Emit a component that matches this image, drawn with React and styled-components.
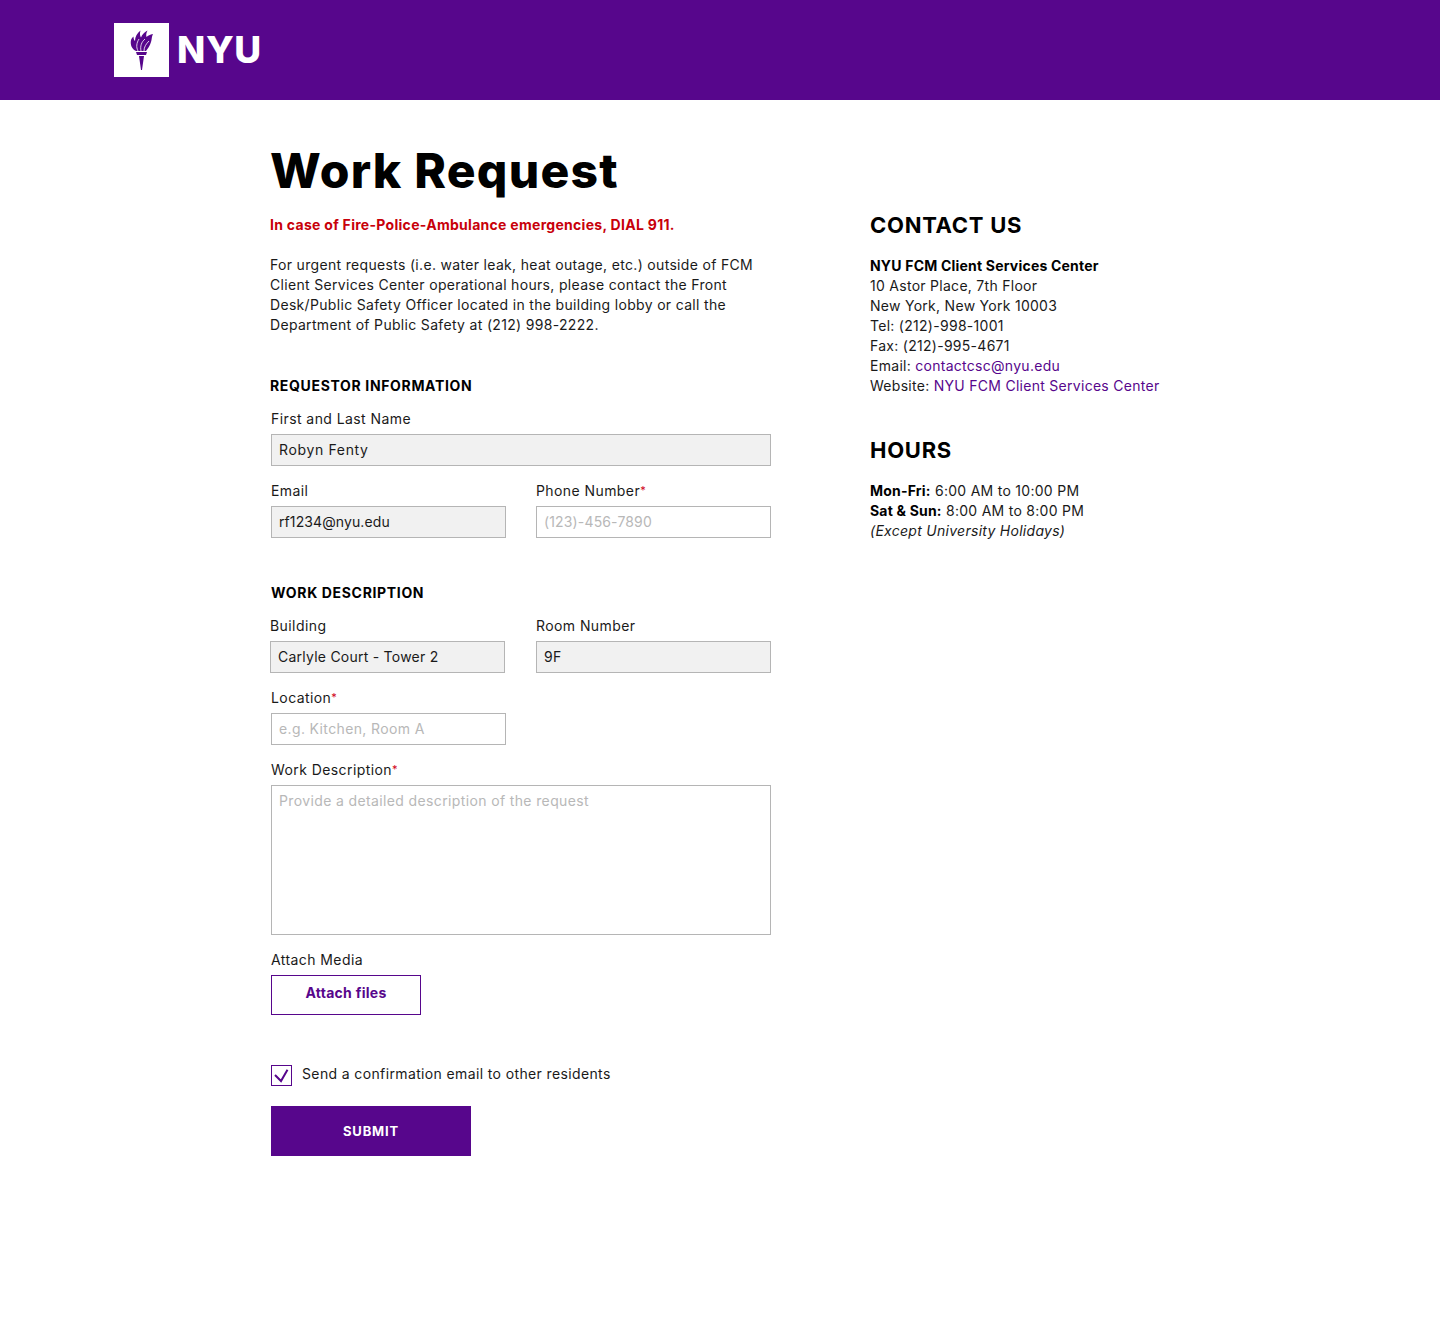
import React from "react";
import styled, { createGlobalStyle } from "styled-components";

const Global = createGlobalStyle`
  html, body { margin: 0; padding: 0; background: #fff; }
  body { font-family: Inter, "Liberation Sans", sans-serif; color: #1a1a1a; }
  * { box-sizing: border-box; }
`;
const Page = styled.div`min-height: 1333px;`;
const Header = styled.header`
  height: 100px; background: #57068c; padding: 23px 0 0 114px;
  display: flex; align-items: flex-start; gap: 8px;
`;
const LogoBox = styled.div`
  width: 55px; height: 54px; background: #fff;
  display: flex; align-items: center; justify-content: center;
`;
const Wordmark = styled.div`
  color: #fff; font-size: 37px; font-weight: 800; line-height: 54px; letter-spacing: 0.6px;
`;
const Columns = styled.div`
  display: flex; padding: 45px 0 0 270px;
`;
const Left = styled.main`width: 600px;`;
const Right = styled.aside`width: 400px; padding-top: 67px;`;
const Title = styled.h1`
  margin: 0; font-size: 48px; line-height: 52px; font-weight: 800; color: #000; letter-spacing: 1.25px;
`;
const Emergency = styled.p`
  margin: 18px 0 0; font-size: 14px; line-height: 20px; font-weight: 700; color: #c8000a; letter-spacing: 0.29px;
`;
const Body = styled.p`
  margin: 20px 0 0; width: 500px; font-size: 14px; line-height: 20px; color: #1a1a1a; letter-spacing: 0.32px;
`;
const SectionTitle = styled.h2`
  margin: ${p => p.$top}px 0 0 ${p => p.$indent}px; font-size: 14px; line-height: 20px; font-weight: 700; color: #000; letter-spacing: 0.66px;
`;
const Row = styled.div`
  display: flex; gap: 30px; margin-top: ${p => p.$top}px; padding-left: ${p => p.$indent || 0}px;
`;
const Field = styled.div`
  width: ${p => p.$w}px; margin-left: ${p => p.$offset || 0}px;
`;
const Label = styled.label`
  display: block; font-size: 14px; line-height: 20px; color: #1a1a1a; letter-spacing: 0.42px; height: 25px;
`;
const Star = styled.span`color: #d0021b; font-size: 11px; line-height: 0; vertical-align: 2px;`;
const Input = styled.input`
  display: block; width: 100%; height: 32px; padding: 0 7px 2px; border: 1px solid #b5b5b5; border-radius: 0; outline: none;
  font: 14px Inter, "Liberation Sans", sans-serif; letter-spacing: ${p => p.$track}px; color: #1a1a1a;
  background: ${p => (p.readOnly ? "#f1f1f1" : "#fff")};
  &::placeholder { color: #b8b8b8; opacity: 1; }
`;
const TextArea = styled.textarea`
  display: block; width: 100%; height: 150px; padding: 5px 7px; border: 1px solid #b5b5b5; border-radius: 0; resize: none; outline: none;
  font: 14px/20px Inter, "Liberation Sans", sans-serif; letter-spacing: 0.37px; background: #fff;
  &::placeholder { color: #b8b8b8; opacity: 1; }
`;
const AttachButton = styled.button`
  display: block; width: 150px; height: 40px; padding: 0 0 5px; background: #fff; border: 1px solid #57068c; color: #57068c;
  font: 700 14px Inter, "Liberation Sans", sans-serif; letter-spacing: 0.28px;
`;
const CheckRow = styled.div`
  display: flex; align-items: flex-start; gap: 10px; margin: 50px 0 0 1px;
`;
const Box = styled.span`
  width: 21px; height: 21px; border: 1px solid #57068c; display: block;
`;
const CheckSvg = styled.svg`display: block;`;
const CheckText = styled.span`font-size: 14px; line-height: 20px; letter-spacing: 0.37px; margin-top: -1px;`;
const Submit = styled.button`
  display: block; width: 200px; height: 50px; margin: 20px 0 0 1px; background: #57068c; border: 0; color: #fff;
  font: 700 13px Inter, "Liberation Sans", sans-serif; letter-spacing: 0.85px;
`;
const SideTitle = styled.h2`
  margin: ${p => p.$top || 0}px 0 0; font-size: 22px; line-height: 26px; font-weight: 700; color: #000; letter-spacing: 0.72px;
`;
const SideText = styled.div`
  margin-top: ${p => p.$top}px; font-size: 14px; line-height: 20px; color: #1a1a1a; letter-spacing: 0.28px;
`;
const Strong = styled.strong`font-weight: 700; color: #000; letter-spacing: 0.2px;`;
const Link = styled.a`color: #57068c; text-decoration: none;`;

const Torch = () => (
  <svg width="25" height="42" viewBox="0 0 25 42" aria-hidden="true">
    <path fill="#57068c" d="M7 22 C3 20 1 16 2 11 C2.5 9.5 3.5 8.5 4.5 7.5 C4.5 10 5 11 6 12 C6 8 8 4 11.5 1.5 C10.5 5 11 7 12 8.5 C13 6 15 3 18.5 1.5 C17 4.5 17 6 17.5 8 C19 6.5 21 5.5 24 5 C22.5 8 23 10 22 13 C21 17 18.5 20 17 22 Z" />
    <path stroke="#fff" strokeWidth="0.8" fill="none" d="M9 22 C7 18 7.5 14 10 10 M12 22 C11 17 12.5 13 16 10 M15 22 C15 18 17 15 20 12" />
    <path fill="#57068c" d="M7 23 H18 L17 26 H8 Z M10 27 H15 L13 41 H12 Z" />
  </svg>
);
const Check = () => (
  <CheckSvg width="19" height="19" viewBox="0 0 19 19" aria-hidden="true">
    <path d="M3 9 L9 15 L15.5 3.7" fill="none" stroke="#57068c" strokeWidth="2" />
  </CheckSvg>
);

export default function App() {
  return (
    <Page>
      <Global />
      <Header>
        <LogoBox><Torch /></LogoBox>
        <Wordmark>NYU</Wordmark>
      </Header>
      <Columns>
        <Left>
          <Title>Work Request</Title>
          <Emergency>In case of Fire-Police-Ambulance emergencies, DIAL 911.</Emergency>
          <Body>For urgent requests (i.e. water leak, heat outage, etc.) outside of FCM Client Services Center operational hours, please contact the Front Desk/Public Safety Officer located in the building lobby or call the Department of Public Safety at (212) 998-2222.</Body>
          <SectionTitle $top={41} $indent={0}>REQUESTOR INFORMATION</SectionTitle>
          <Row $top={13} $indent={1}>
            <Field $w={500}><Label>First and Last Name</Label><Input readOnly $track={0.65} value="Robyn Fenty" /></Field>
          </Row>
          <Row $top={15} $indent={1}>
            <Field $w={235}><Label>Email</Label><Input readOnly $track={0.1} value="rf1234@nyu.edu" /></Field>
            <Field $w={235}><Label>Phone Number<Star>*</Star></Label><Input $track={0.15} placeholder="(123)-456-7890" /></Field>
          </Row>
          <SectionTitle $top={45} $indent={1}>WORK DESCRIPTION</SectionTitle>
          <Row $top={13}>
            <Field $w={235}><Label>Building</Label><Input readOnly $track={0.24} value="Carlyle Court - Tower 2" /></Field>
            <Field $w={235} $offset={1}><Label>Room Number</Label><Input readOnly $track={0.37} value="9F" /></Field>
          </Row>
          <Row $top={15} $indent={1}>
            <Field $w={235}><Label>Location<Star>*</Star></Label><Input $track={0.37} placeholder="e.g. Kitchen, Room A" /></Field>
          </Row>
          <Row $top={15} $indent={1}>
            <Field $w={500}><Label>Work Description<Star>*</Star></Label><TextArea placeholder="Provide a detailed description of the request" /></Field>
          </Row>
          <Row $top={15} $indent={1}>
            <Field $w={150}><Label>Attach Media</Label><AttachButton>Attach files</AttachButton></Field>
          </Row>
          <CheckRow><Box><Check /></Box><CheckText>Send a confirmation email to other residents</CheckText></CheckRow>
          <Submit>SUBMIT</Submit>
        </Left>
        <Right>
          <SideTitle>CONTACT US</SideTitle>
          <SideText $top={18}>
            <Strong>NYU FCM Client Services Center</Strong><br />
            10 Astor Place, 7th Floor<br />
            New York, New York 10003<br />
            Tel: (212)-998-1001<br />
            Fax: (212)-995-4671<br />
            Email: <Link href="#">contactcsc@nyu.edu</Link><br />
            Website: <Link href="#">NYU FCM Client Services Center</Link>
          </SideText>
          <SideTitle $top={41}>HOURS</SideTitle>
          <SideText $top={18}>
            <Strong>Mon-Fri:</Strong> 6:00 AM to 10:00 PM<br />
            <Strong>Sat &amp; Sun:</Strong> 8:00 AM to 8:00 PM<br />
            <em>(Except University Holidays)</em>
          </SideText>
        </Right>
      </Columns>
    </Page>
  );
}
